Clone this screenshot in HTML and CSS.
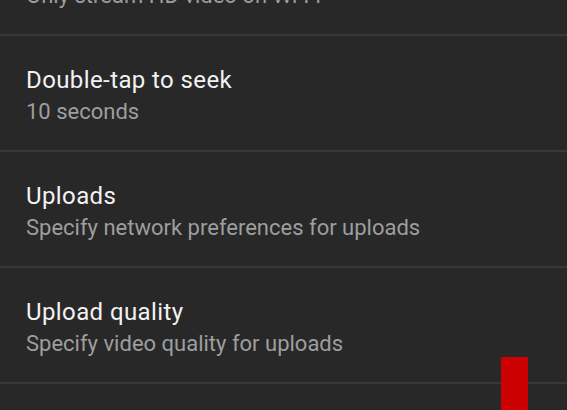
FILE: index.html
```html
<!DOCTYPE html>
<html lang="en">
<head>
  <meta charset="UTF-8">
  <title>Settings</title>
  <meta name="viewport" content="width=device-width,initial-scale=1">
  <link rel="stylesheet" href="styles.css">
</head>
<body>
  <div class="settings">
    <div class="item">
      <div class="title">Limit mobile data usage</div>
      <div class="sub">Only stream HD video on Wi-Fi</div>
    </div>
    <div class="item">
      <div class="title">Double-tap to seek</div>
      <div class="sub">10 seconds</div>
    </div>
    <div class="item">
      <div class="title">Uploads</div>
      <div class="sub">Specify network preferences for uploads</div>
    </div>
    <div class="item">
      <div class="title">Upload quality</div>
      <div class="sub">Specify video quality for uploads</div>
    </div>
    <div class="item">
      <div class="title">Location</div>
      <div class="sub">United States</div>
    </div>
  </div>
  <div class="marker"></div>
</body>
</html>
```

FILE: styles.css
```css
html,body{height:100%}
body{margin:0;background:#282828;font-family:Roboto,"Noto Sans",sans-serif;overflow:hidden;position:relative}
.settings{margin-top:-80px}
.item{padding:28px 26px 23px;border-bottom:2px solid #383838}
.title{font-size:24px;line-height:32px;letter-spacing:.4px;color:#f2f2f2}
.sub{margin-top:1px;font-size:22px;line-height:30px;color:#9e9e9e}

/* red scroll marker */
.marker{position:absolute;left:501px;top:357px;width:27px;height:60px;background:#cc0000}
```
